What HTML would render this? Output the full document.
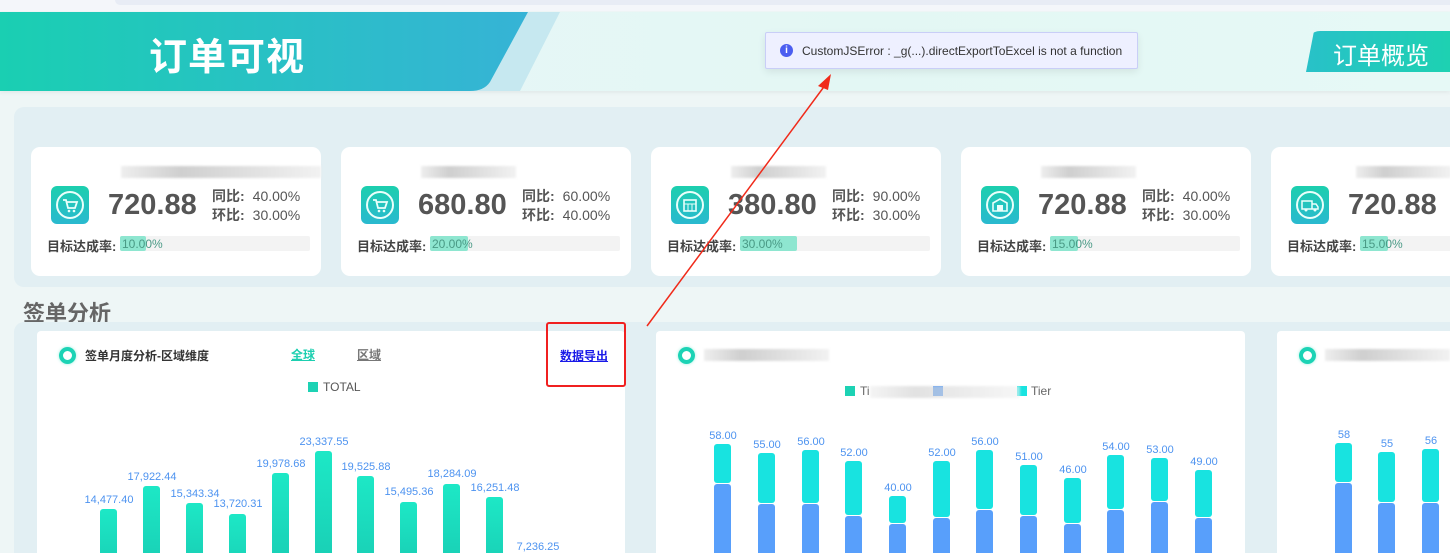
<!DOCTYPE html>
<html><head><meta charset="utf-8">
<style>
*{margin:0;padding:0;box-sizing:border-box}
html,body{width:1450px;height:553px;overflow:hidden}
body{background:#eef6f6;font-family:"Liberation Sans","Noto Sans CJK SC",sans-serif;position:relative}
.abs{position:absolute}
.card{position:absolute;top:147px;width:290px;height:129px;background:#fff;border-radius:9px}
.blur{position:absolute;top:19px;height:12px;background:linear-gradient(90deg,#eee,#cfcfcf 30%,#dedede 60%,#f2f2f2);filter:blur(1px)}
.ic{position:absolute;left:20px;top:39px;width:38px;height:38px;border-radius:6px;background:linear-gradient(180deg,#1ccfae,#2ab9cf)}
.ic svg{position:absolute;left:0;top:0}
.num{position:absolute;left:77px;top:42px;font-size:29px;font-weight:bold;color:#555}
.cmp{position:absolute;left:181px;font-size:14px;color:#555}
.cmp b{font-weight:bold}
.cmp span{margin-left:8px}
.tg{position:absolute;left:16px;top:89px;font-size:13px;color:#444;font-weight:bold}
.bar{position:absolute;left:89px;top:89px;width:190px;height:15px;background:#f3f3f3;border-radius:2px}
.bar i{position:absolute;left:0;top:0;height:15px;background:#8ee6d0;border-radius:2px}
.bar span{position:absolute;left:2px;top:1px;font-size:12px;color:#4a9a86}
.chart{position:absolute;top:331px;height:230px;background:#fff;border-radius:4px}
.ring{position:absolute;left:22px;top:16px;width:17px;height:17px;border:4px solid #1cd3b5;border-radius:50%;box-shadow:0 0 3px #9ef0e0}
.lbl{position:absolute;font-size:11px;color:#4d93f0;text-align:center;width:60px;margin-left:-21px}
.b{position:absolute;width:17px;border-radius:3px}
.g{background:linear-gradient(180deg,#1de8c6,#19cfb5)}
.c{background:#18e3e0}
.bl{background:#589ffb}
</style></head><body>
<div class="abs" style="left:0;top:0;width:1450px;height:11px;background:#f4f6fa"></div>
<div class="abs" style="left:115px;top:0;width:1335px;height:5px;background:#e8ecf5;border-radius:0 0 0 8px"></div>
<div class="abs" style="left:0;top:12px;width:1450px;height:79px;background:linear-gradient(90deg,#e9f6f8,#e3f7f4 60%,#e6f9f6);box-shadow:0 2px 4px rgba(0,0,0,.05)"></div>
<svg class="abs" style="left:0;top:12px" width="620" height="79">
<defs><linearGradient id="hg" x1="0" x2="1"><stop offset="0" stop-color="#1acfb2"/><stop offset="1" stop-color="#36b3d6"/></linearGradient></defs>
<path d="M0 0 H560 L520 79 H0Z" fill="#c6e8f0"/>
<path d="M0 0 H528 L490 70 Q484 79 470 79 H0Z" fill="url(#hg)"/>
</svg>
<div class="abs" style="left:149px;top:26px;font-size:38px;font-weight:bold;color:#fff;letter-spacing:1px">订单可视</div>
<div class="abs" style="left:1306px;top:31px;width:150px;height:41px;background:linear-gradient(90deg,#28c1c8,#1dd2b1);border-radius:14px 0 0 0;clip-path:polygon(8px 0,100% 0,100% 100%,0 100%)"></div>
<div class="abs" style="left:1333px;top:36px;font-size:24px;color:#fff">订单概览</div>
<div class="abs" style="left:765px;top:32px;width:373px;height:37px;background:#eef0ff;border:1px solid #c9cef7;border-radius:2px;box-shadow:0 3px 8px rgba(0,0,0,.08)"></div>
<div class="abs" style="left:780px;top:44px;width:13px;height:13px;border-radius:50%;background:#4b5ef0;color:#fff;font-size:10px;font-weight:bold;text-align:center;line-height:13px">i</div>
<div class="abs" style="left:802px;top:44px;font-size:12px;color:#333">CustomJSError : _g(...).directExportToExcel is not a function</div>
<div class="abs" style="left:14px;top:107px;width:1450px;height:180px;background:#e2eff3;border-radius:10px"></div>
<svg width="0" height="0" style="position:absolute"><defs><g id="cart"><circle cx="19" cy="19" r="13" fill="none" stroke="#eafffb" stroke-width="2"/><path d="M12 14h3l2 8h7l2-6h-10" fill="none" stroke="#eafffb" stroke-width="1.8"/><circle cx="18" cy="25" r="1.3" fill="#eafffb"/><circle cx="23" cy="25" r="1.3" fill="#eafffb"/></g></defs></svg>
<div class="card" style="left:31px"><div class="blur" style="left:90px;width:200px"></div><div class="ic"><svg width="38" height="38"><use href="#cart"/></svg></div><div class="num">720.88</div><div class="cmp" style="top:39px"><b>同比:</b><span>40.00%</span></div><div class="cmp" style="top:58px"><b>环比:</b><span>30.00%</span></div><div class="tg">目标达成率:</div><div class="bar"><i style="width:26px"></i><span>10.00%</span></div></div>
<div class="card" style="left:341px"><div class="blur" style="left:80px;width:95px"></div><div class="ic"><svg width="38" height="38"><use href="#cart"/></svg></div><div class="num">680.80</div><div class="cmp" style="top:39px"><b>同比:</b><span>60.00%</span></div><div class="cmp" style="top:58px"><b>环比:</b><span>40.00%</span></div><div class="tg">目标达成率:</div><div class="bar"><i style="width:38px"></i><span>20.00%</span></div></div>
<div class="card" style="left:651px"><div class="blur" style="left:80px;width:95px"></div><div class="ic"><svg width="38" height="38"><circle cx="19" cy="19" r="13" fill="none" stroke="#eafffb" stroke-width="2"/><rect x="13" y="14" width="12" height="11" fill="none" stroke="#eafffb" stroke-width="1.6"/><path d="M13 18h12M17 18v7M21 18v7" stroke="#eafffb" stroke-width="1"/></svg></div><div class="num">380.80</div><div class="cmp" style="top:39px"><b>同比:</b><span>90.00%</span></div><div class="cmp" style="top:58px"><b>环比:</b><span>30.00%</span></div><div class="tg">目标达成率:</div><div class="bar"><i style="width:57px"></i><span>30.00%</span></div></div>
<div class="card" style="left:961px"><div class="blur" style="left:80px;width:95px"></div><div class="ic"><svg width="38" height="38"><circle cx="19" cy="19" r="13" fill="none" stroke="#eafffb" stroke-width="2"/><path d="M12 17l7-4 7 4v8H12z" fill="none" stroke="#eafffb" stroke-width="1.6"/><rect x="16" y="19" width="6" height="6" fill="#eafffb"/></svg></div><div class="num">720.88</div><div class="cmp" style="top:39px"><b>同比:</b><span>40.00%</span></div><div class="cmp" style="top:58px"><b>环比:</b><span>30.00%</span></div><div class="tg">目标达成率:</div><div class="bar"><i style="width:28px"></i><span>15.00%</span></div></div>
<div class="card" style="left:1271px"><div class="blur" style="left:85px;width:95px"></div><div class="ic"><svg width="38" height="38"><circle cx="19" cy="19" r="13" fill="none" stroke="#eafffb" stroke-width="2"/><path d="M11 15h10v8H11zM21 18h4l2 3v2h-6" fill="none" stroke="#eafffb" stroke-width="1.5"/><circle cx="15" cy="24" r="1.5" fill="#eafffb"/><circle cx="24" cy="24" r="1.5" fill="#eafffb"/></svg></div><div class="num">720.88</div><div class="tg">目标达成率:</div><div class="bar"><i style="width:28px"></i><span>15.00%</span></div></div>
<div class="abs" style="left:23px;top:296px;font-size:22px;font-weight:bold;color:#666">签单分析</div>
<div class="abs" style="left:14px;top:322px;width:1450px;height:240px;background:#e2eff3;border-radius:10px"></div>
<div class="chart" style="left:37px;width:588px">
<div class="ring"></div>
<div class="abs" style="left:48px;top:16px;font-size:12px;font-weight:bold;color:#333">签单月度分析-区域维度</div>
<div class="abs" style="left:254px;top:15px;font-size:12px;font-weight:bold;color:#1dcfb0;text-decoration:underline">全球</div>
<div class="abs" style="left:320px;top:15px;font-size:12px;font-weight:bold;color:#777;text-decoration:underline">区域</div>
<div class="abs" style="left:523px;top:16px;font-size:12px;font-weight:bold;color:#1a1ae8;text-decoration:underline">数据导出</div>
<div class="abs" style="left:271px;top:51px;width:10px;height:10px;background:#1dd2b4"></div>
<div class="abs" style="left:286px;top:49px;font-size:12px;color:#555">TOTAL</div>
</div>
<div class="abs" style="left:546px;top:322px;width:80px;height:65px;border:2px solid #f02020;border-radius:3px"></div>
<div class="b g" style="left:100px;top:509px;height:60px"></div><div class="lbl" style="left:100px;top:494px">14,477.40</div>
<div class="b g" style="left:143px;top:486px;height:80px"></div><div class="lbl" style="left:143px;top:471px">17,922.44</div>
<div class="b g" style="left:186px;top:503px;height:60px"></div><div class="lbl" style="left:186px;top:488px">15,343.34</div>
<div class="b g" style="left:229px;top:514px;height:60px"></div><div class="lbl" style="left:229px;top:498px">13,720.31</div>
<div class="b g" style="left:272px;top:473px;height:90px"></div><div class="lbl" style="left:272px;top:458px">19,978.68</div>
<div class="b g" style="left:315px;top:451px;height:110px"></div><div class="lbl" style="left:315px;top:436px">23,337.55</div>
<div class="b g" style="left:357px;top:476px;height:90px"></div><div class="lbl" style="left:357px;top:461px">19,525.88</div>
<div class="b g" style="left:400px;top:502px;height:60px"></div><div class="lbl" style="left:400px;top:486px">15,495.36</div>
<div class="b g" style="left:443px;top:484px;height:80px"></div><div class="lbl" style="left:443px;top:468px">18,284.09</div>
<div class="b g" style="left:486px;top:497px;height:70px"></div><div class="lbl" style="left:486px;top:482px">16,251.48</div>
<div class="lbl" style="left:529px;top:541px">7,236.25</div>
<div class="chart" style="left:656px;width:589px">
<div class="ring"></div>
<div class="blur" style="left:48px;top:18px;width:125px"></div>
<div class="abs" style="left:189px;top:55px;width:10px;height:10px;background:#1dd2b4"></div>
<div class="abs" style="left:277px;top:55px;width:10px;height:10px;background:#589ffb"></div>
<div class="abs" style="left:361px;top:55px;width:10px;height:10px;background:#18e3e0"></div>
<div class="abs" style="left:204px;top:53px;font-size:12px;color:#666">Ti</div>
<div class="blur" style="left:214px;top:55px;width:150px;height:12px;opacity:.6"></div>
<div class="abs" style="left:375px;top:53px;font-size:12px;color:#666">Tier</div>
</div>
<div class="chart" style="left:1277px;width:200px">
<div class="ring"></div>
<div class="blur" style="left:48px;top:18px;width:125px"></div>
</div>
<div id="stk"></div>
<script>
var d=[[714,444,484,'58.00'],[758,453,504,'55.00'],[802,450,504,'56.00'],[845,461,516,'52.00'],[889,496,524,'40.00'],[933,461,518,'52.00'],[976,450,510,'56.00'],[1020,465,516,'51.00'],[1064,478,524,'46.00'],[1107,455,510,'54.00'],[1151,458,502,'53.00'],[1195,470,518,'49.00'],[1335,443,483,'58'],[1378,452,503,'55'],[1422,449,503,'56']];
var h='';d.forEach(function(a){h+='<div class="b c" style="left:'+a[0]+'px;top:'+a[1]+'px;height:'+(a[2]-a[1]-1)+'px"></div><div class="b bl" style="left:'+a[0]+'px;top:'+a[2]+'px;height:'+(560-a[2])+'px"></div><div class="lbl" style="left:'+a[0]+'px;top:'+(a[1]-14)+'px">'+a[3]+'</div>';});
document.getElementById('stk').innerHTML=h;
</script>
<svg class="abs" style="left:0;top:0" width="1450" height="553">
<line x1="647" y1="326" x2="826" y2="84" stroke="#f02a1a" stroke-width="1.5"/>
<path d="M831 74 L818 86 L828 90Z" fill="#f02a1a"/>
</svg>
</body></html>
